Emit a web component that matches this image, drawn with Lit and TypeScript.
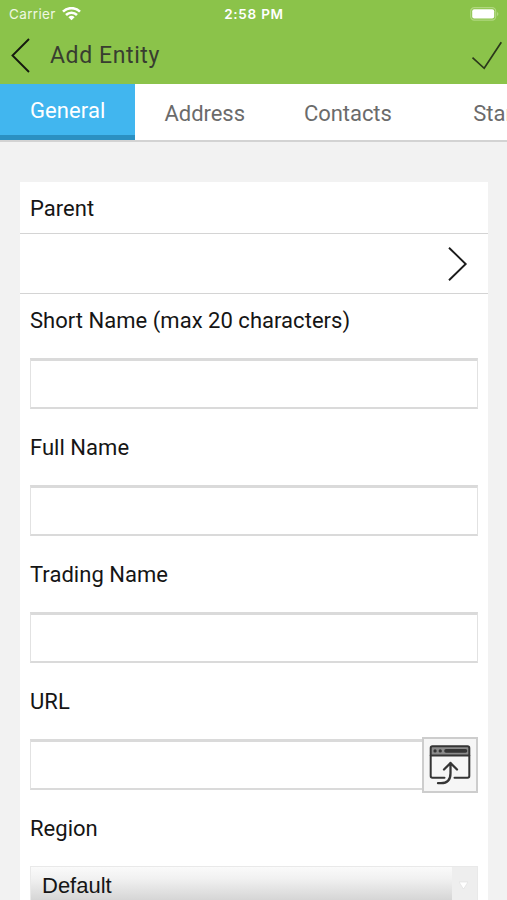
import { LitElement, html, css, nothing } from "lit";
import { customElement, property } from "lit/decorators.js";

@customElement("status-bar")
class StatusBar extends LitElement {
  static styles = css`
    :host { display: grid; grid-template-columns: 1fr auto 1fr; align-items: center; height: 27px; padding: 0 8px 0 9px; color: #fff; font: 13.5px/28px Inter, sans-serif; }
    .left { display: flex; align-items: center; gap: 6px; color: #eff8e2; }
    .carrier { letter-spacing: 0.35px; }
    .time { font-weight: 600; letter-spacing: 0.75px; }
    .battery { justify-self: end; }
    svg { display: block; }
  `;
  render() {
    return html`
      <div class="left">
        <span class="carrier">Carrier</span>
        <svg width="19" height="14" viewBox="0 0 19 14" fill="none" stroke="#fff" stroke-width="2.6">
          <path d="M1 4.7a12 12 0 0 1 17 0M4 8a7.8 7.8 0 0 1 11 0" />
          <path d="M6.4 10.2a4.5 4.5 0 0 1 6.2 0L9.5 13.3z" fill="#fff" stroke="none" />
        </svg>
      </div>
      <span class="time">2:58 PM</span>
      <svg class="battery" width="29" height="14" viewBox="0 0 29 14">
        <rect x="0.7" y="0.7" width="25" height="12.4" rx="3.6" fill="none" stroke="#b0d77f" stroke-width="1.2" />
        <rect x="2.2" y="2.2" width="22" height="9.4" rx="2" fill="#fff" />
        <path d="M27 5v4q1.4-.6 1.4-2T27 5" fill="#b0d77f" />
      </svg>`;
  }
}

@customElement("nav-header")
class NavHeader extends LitElement {
  static styles = css`
    :host { display: flex; align-items: center; height: 57px; padding: 0 4px 0 10px; color: #383d30; }
    .title { flex: 1; margin-left: 19px; font: 450 23px/59px Roboto, sans-serif; letter-spacing: 0.6px; }
    svg { display: block; flex: none; fill: none; }
  `;
  render() {
    return html`
      <svg width="21" height="36" viewBox="0 0 21 36" stroke="#15190f" stroke-width="1.9"><path d="M19 1 2.5 17.500 19 34" /></svg>
      <span class="title">Add Entity</span>
      <svg width="32" height="30" viewBox="0 0 32 30" stroke="#2b381b" stroke-width="1.7"><path d="M1.5 16.700 13.2 27.300 30.3 1.300" /></svg>`;
  }
}

@customElement("tab-strip")
class TabStrip extends LitElement {
  static styles = css`
    :host { display: flex; height: 56px; overflow: hidden; background: #fff; border-bottom: 2px solid #d3d3d3; font: 22px/59px Roboto, sans-serif; color: #6b6b6b; }
    .tab { flex: none; box-sizing: border-box; padding: 0 29.5px; white-space: nowrap; letter-spacing: -0.05px; }
    .active { width: 135px; padding: 0 0 0 30px; line-height: 54px; color: #fff; background: #41b6ef; border-bottom: 5px solid #2b90c2; letter-spacing: 0.1px; }
    .last { padding-left: 52px; }
  `;
  render() {
    return html`<div class="tab active">General</div><div class="tab">Address</div><div class="tab">Contacts</div><div class="tab last">Standard</div>`;
  }
}

@customElement("form-field")
class FormField extends LitElement {
  @property() label = "";
  @property() kind = "text";
  static styles = css`
    :host { display: block; height: 127px; padding: 0 10px; box-sizing: border-box; }
    .label { height: 64px; font: 22px/54px Roboto, sans-serif; letter-spacing: 0.03px; }
    .line { display: flex; align-items: center; height: 51px; }
    .input { flex: 1; box-sizing: border-box; height: 51px; background: #fff; border: 1px solid #e2e2e2; border-top: 3px solid #dadada; border-bottom: 2px solid #dadada; }
    .launch { box-sizing: border-box; width: 56px; height: 56px; display: grid; place-items: center; background: #f6f6f6; border: 2px solid #cdcdcd; margin-left: -1px; }
    .select { display: flex; height: 51px; box-sizing: border-box; border: 1px solid #e9e9e9; background: #eee; }
    .value { flex: 1; padding-left: 11px; font: 22px/38px "Liberation Sans", Arial, sans-serif; background: linear-gradient(#fafafa, #f1f1f1 24%, #d5d5d5 68%, #cfcfcf); }
    .arrow { width: 25px; padding: 14px 0 0 7px; box-sizing: border-box; }
    svg { display: block; }
  `;
  render() {
    return html`
      <div class="label">${this.label}</div>
      ${this.kind === "select"
        ? html`<div class="select"><div class="value">Default</div><div class="arrow"><svg width="9" height="8" viewBox="0 0 9 8"><path d="M0 1h9L4.5 8z" fill="#fff" stroke="#ddd" stroke-width=".6" /></svg></div></div>`
        : html`<div class="line"><div class="input"></div>${this.kind === "url"
            ? html`<div class="launch"><svg width="42" height="42" viewBox="0 0 42 42" fill="none" stroke="#353535" stroke-width="2" stroke-linecap="round" stroke-linejoin="round">
                <path d="M1.700 11.500h38.600V4q0-1.700-1.700-1.700H3.400Q1.700 2.300 1.700 4z" fill="#8b8b8b" />
                <path d="M1.700 11.500v20.500q0 1.700 1.700 1.700H15.500M40.300 11.500v20.500q0 1.700-1.700 1.700H25.500" />
                <path d="M17 6.900h19.500" stroke-width="3.600" />
                <path d="M6 6.900h.1M11.200 6.900h.1" stroke-width="3.200" />
                <path d="M9 39.200h3q9.500 0 9.500-10V19M15 25.500l6.500-6.500 6.500 6.500" stroke-width="2.300" />
              </svg></div>` : nothing}</div>`}`;
  }
}

@customElement("app-root")
class AppRoot extends LitElement {
  static styles = css`
    :host { display: block; height: 900px; overflow: hidden; background: #f2f2f2; color: #151515; }
    .top { background: #8bc34a; height: 84px; }
    .card { margin: 40px 19px 0 20px; background: #fff; }
    .heading { height: 51px; border-bottom: 1px solid #d4d4d4; padding-left: 10px; font: 22px/53px Roboto, sans-serif; letter-spacing: 0.03px; }
    .picker { height: 59px; border-bottom: 1px solid #d4d4d4; display: flex; align-items: center; justify-content: flex-end; padding-right: 20px; }
  `;
  render() {
    return html`
      <div class="top"><status-bar></status-bar><nav-header></nav-header></div>
      <tab-strip></tab-strip>
      <div class="card">
        <div class="heading">Parent</div>
        <div class="picker"><svg width="21" height="36" viewBox="0 0 21 36" fill="none" stroke="#1b1b1b" stroke-width="1.9"><path d="M2 1.700 18.700 18 2 34.300" /></svg></div>
        <form-field label="Short Name (max 20 characters)"></form-field>
        <form-field label="Full Name"></form-field>
        <form-field label="Trading Name"></form-field>
        <form-field label="URL" kind="url"></form-field>
        <form-field label="Region" kind="select"></form-field>
      </div>`;
  }
}
